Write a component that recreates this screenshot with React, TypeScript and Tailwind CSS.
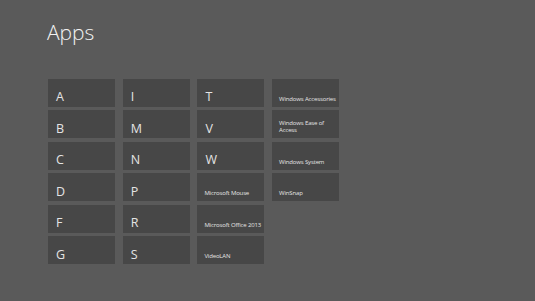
const columns: string[][] = [
  ["A", "B", "C", "D", "F", "G"],
  ["I", "M", "N", "P", "R", "S"],
  ["T", "V", "W", "Microsoft Mouse", "Microsoft Office 2013", "VideoLAN"],
  ["Windows Accessories", "Windows Ease of\nAccess", "Windows System", "WinSnap"],
];

const Tile = ({ label }: { label: string }) => {
  const isLetter = label.length === 1;
  return (
    <div className="w-[67px] h-[28px] bg-[#474747] flex items-end pl-[7px] pb-[3px]">
      {isLetter ? (
        <span className="text-[12.5px] leading-none text-[#e4e4e4] pl-px">{label}</span>
      ) : (
        <span className="text-[6px] leading-[7px] text-[#e4e4e4] pb-[1px] whitespace-pre tracking-[-0.15px]">
          {label}
        </span>
      )}
    </div>
  );
};

export default function App() {
  return (
    <div className="w-[535px] h-[301px] bg-[#5a5a5a] overflow-hidden font-['Open_Sans',sans-serif]">
      <h1 className="pl-[47px] pt-[18px] text-[21px] leading-[28px] font-light text-[#f2f2f2]">Apps</h1>
      <div className="flex gap-x-[7.7px] pl-[48px] pt-[32.5px]">
        {columns.map((col, i) => (
          <div key={i} className="flex flex-col gap-y-[3.6px]">
            {col.map((label) => (
              <Tile key={label} label={label} />
            ))}
          </div>
        ))}
      </div>
    </div>
  );
}
